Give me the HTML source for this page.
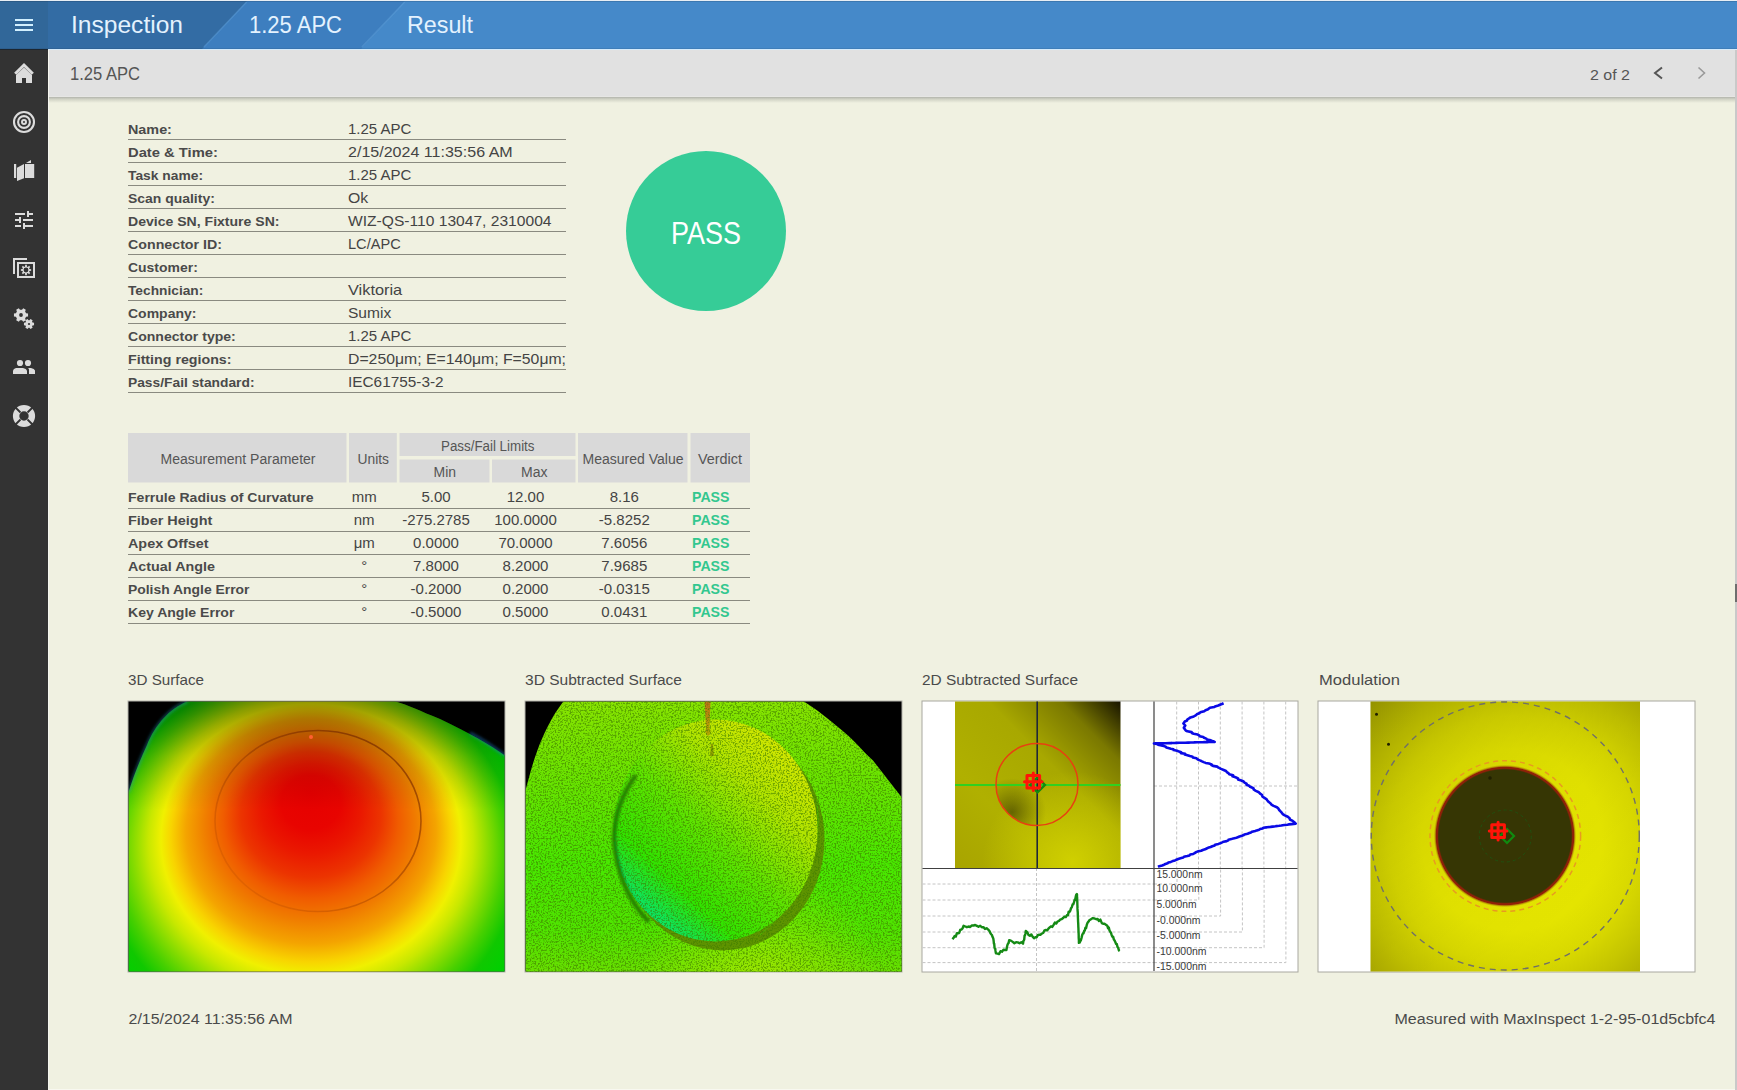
<!DOCTYPE html>
<html><head><meta charset="utf-8"><title>Inspection Result</title>
<style>html,body{margin:0;padding:0;width:1737px;height:1090px;overflow:hidden;background:#f0f1e1}
svg{display:block;font-family:"Liberation Sans", sans-serif}</style></head>
<body><svg width="1737" height="1090" viewBox="0 0 1737 1090">
<rect x="0" y="0" width="1737" height="1090" fill="#f0f1e1" />
<rect x="0" y="0" width="1737" height="1" fill="#e8eef4" />
<defs><linearGradient id="hdr" x1="0" x2="1" y1="0" y2="0"><stop offset="0" stop-color="#4388c8"/><stop offset="1" stop-color="#4589ca"/></linearGradient><linearGradient id="shadow" x1="0" x2="0" y1="0" y2="1"><stop offset="0" stop-color="#b2b4ac"/><stop offset="0.35" stop-color="#d0d2c4"/><stop offset="1" stop-color="#f0f1e1"/></linearGradient></defs>
<rect x="0" y="1" width="1737" height="48" fill="#4589c9" />
<polygon points="0,1 405,1 361,49 0,49" fill="#3d7ebf"/>
<polygon points="0,1 247,1 202,49 0,49" fill="#336ca4"/>
<rect x="0" y="1" width="48" height="48" fill="#316799" />
<rect x="48" y="49" width="1689" height="1" fill="#d4eafa" />
<rect x="0" y="1" width="1737" height="1" fill="#000000" opacity="0.12"/>
<rect x="0" y="48" width="1737" height="1" fill="#000000" opacity="0.08"/>
<path d="M246.6,2 L203.9,47 M404.6,2 L361.9,47" stroke="#6aa8e0" stroke-opacity="0.35" stroke-width="1.6"/>
<rect x="0" y="49" width="48" height="1041" fill="#333333" />
<rect x="0" y="49" width="48" height="1" fill="#1c2630" />
<rect x="48" y="50" width="1687" height="47" fill="#e1e1e1" />
<rect x="48" y="97" width="1687" height="6" fill="url(#shadow)" />
<rect x="48" y="96" width="1687" height="1" fill="#e6e6e4" />
<rect x="48" y="50" width="1" height="1040" fill="#f6f6f0" />
<rect x="1735" y="50" width="2" height="1040" fill="#c9c9c9" />
<rect x="1735" y="584" width="2" height="18" fill="#6e6e6e" />
<rect x="48" y="1089" width="1687" height="1" fill="#f8f8f0" />
<text x="71" y="33" font-size="23.5" fill="#e4f2fe" textLength="112" lengthAdjust="spacingAndGlyphs" >Inspection</text>
<text x="249" y="33" font-size="23.5" fill="#e4f2fe" textLength="93" lengthAdjust="spacingAndGlyphs" >1.25 APC</text>
<text x="407" y="33" font-size="23.5" fill="#e4f2fe" textLength="66" lengthAdjust="spacingAndGlyphs" >Result</text>
<rect x="15" y="19" width="18" height="2" fill="#d2f0ff" />
<rect x="15" y="24" width="18" height="2" fill="#d2f0ff" />
<rect x="15" y="29" width="18" height="2" fill="#d2f0ff" />
<text x="70" y="80" font-size="17.5" fill="#555555" textLength="70" lengthAdjust="spacingAndGlyphs" >1.25 APC</text>
<text x="1590" y="80" font-size="15" fill="#555555" textLength="40" lengthAdjust="spacingAndGlyphs" >2 of 2</text>
<polyline points="1662,67.5 1655,73 1662,78.5" fill="none" stroke="#555" stroke-width="2"/>
<polyline points="1698.5,67.5 1704.5,73 1698.5,78.5" fill="none" stroke="#999" stroke-width="1.6"/>
<text x="128" y="134" font-size="13.5" fill="#4a4a4a" font-weight="bold" textLength="43.9" lengthAdjust="spacingAndGlyphs" >Name:</text>
<text x="348" y="134" font-size="14.5" fill="#444444" textLength="63.4" lengthAdjust="spacingAndGlyphs" >1.25 APC</text>
<rect x="128" y="139" width="438" height="1" fill="#8a8a80" />
<text x="128" y="157" font-size="13.5" fill="#4a4a4a" font-weight="bold" textLength="89.9" lengthAdjust="spacingAndGlyphs" >Date &amp; Time:</text>
<text x="348" y="157" font-size="14.5" fill="#444444" textLength="164.7" lengthAdjust="spacingAndGlyphs" >2/15/2024 11:35:56 AM</text>
<rect x="128" y="162" width="438" height="1" fill="#8a8a80" />
<text x="128" y="180" font-size="13.5" fill="#4a4a4a" font-weight="bold" textLength="75.0" lengthAdjust="spacingAndGlyphs" >Task name:</text>
<text x="348" y="180" font-size="14.5" fill="#444444" textLength="63.4" lengthAdjust="spacingAndGlyphs" >1.25 APC</text>
<rect x="128" y="185" width="438" height="1" fill="#8a8a80" />
<text x="128" y="203" font-size="13.5" fill="#4a4a4a" font-weight="bold" textLength="86.8" lengthAdjust="spacingAndGlyphs" >Scan quality:</text>
<text x="348" y="203" font-size="14.5" fill="#444444" textLength="20.2" lengthAdjust="spacingAndGlyphs" >Ok</text>
<rect x="128" y="208" width="438" height="1" fill="#8a8a80" />
<text x="128" y="226" font-size="13.5" fill="#4a4a4a" font-weight="bold" textLength="151.5" lengthAdjust="spacingAndGlyphs" >Device SN, Fixture SN:</text>
<text x="348" y="226" font-size="14.5" fill="#444444" textLength="203.5" lengthAdjust="spacingAndGlyphs" >WIZ-QS-110 13047, 2310004</text>
<rect x="128" y="231" width="438" height="1" fill="#8a8a80" />
<text x="128" y="249" font-size="13.5" fill="#4a4a4a" font-weight="bold" textLength="94.0" lengthAdjust="spacingAndGlyphs" >Connector ID:</text>
<text x="348" y="249" font-size="14.5" fill="#444444" textLength="52.7" lengthAdjust="spacingAndGlyphs" >LC/APC</text>
<rect x="128" y="254" width="438" height="1" fill="#8a8a80" />
<text x="128" y="272" font-size="13.5" fill="#4a4a4a" font-weight="bold" textLength="69.8" lengthAdjust="spacingAndGlyphs" >Customer:</text>
<rect x="128" y="277" width="438" height="1" fill="#8a8a80" />
<text x="128" y="295" font-size="13.5" fill="#4a4a4a" font-weight="bold" textLength="75.3" lengthAdjust="spacingAndGlyphs" >Technician:</text>
<text x="348" y="295" font-size="14.5" fill="#444444" textLength="54.2" lengthAdjust="spacingAndGlyphs" >Viktoria</text>
<rect x="128" y="300" width="438" height="1" fill="#8a8a80" />
<text x="128" y="318" font-size="13.5" fill="#4a4a4a" font-weight="bold" textLength="68.4" lengthAdjust="spacingAndGlyphs" >Company:</text>
<text x="348" y="318" font-size="14.5" fill="#444444" textLength="43.2" lengthAdjust="spacingAndGlyphs" >Sumix</text>
<rect x="128" y="323" width="438" height="1" fill="#8a8a80" />
<text x="128" y="341" font-size="13.5" fill="#4a4a4a" font-weight="bold" textLength="107.8" lengthAdjust="spacingAndGlyphs" >Connector type:</text>
<text x="348" y="341" font-size="14.5" fill="#444444" textLength="63.4" lengthAdjust="spacingAndGlyphs" >1.25 APC</text>
<rect x="128" y="346" width="438" height="1" fill="#8a8a80" />
<text x="128" y="364" font-size="13.5" fill="#4a4a4a" font-weight="bold" textLength="103.5" lengthAdjust="spacingAndGlyphs" >Fitting regions:</text>
<text x="348" y="364" font-size="14.5" fill="#444444" textLength="218.0" lengthAdjust="spacingAndGlyphs" >D=250μm; E=140μm; F=50μm;</text>
<rect x="128" y="369" width="438" height="1" fill="#8a8a80" />
<text x="128" y="387" font-size="13.5" fill="#4a4a4a" font-weight="bold" textLength="126.5" lengthAdjust="spacingAndGlyphs" >Pass/Fail standard:</text>
<text x="348" y="387" font-size="14.5" fill="#444444" textLength="95.6" lengthAdjust="spacingAndGlyphs" >IEC61755-3-2</text>
<rect x="128" y="392" width="438" height="1" fill="#8a8a80" />
<circle cx="706" cy="231" r="80" fill="#36cc97"/>
<text x="706" y="244" font-size="31" fill="#ffffff" text-anchor="middle" textLength="70" lengthAdjust="spacingAndGlyphs" >PASS</text>
<rect x="128" y="433" width="218.5" height="49.5" fill="#d9d9d9" />
<rect x="349" y="433" width="47.8" height="49.5" fill="#d9d9d9" />
<rect x="399.5" y="433" width="176" height="23" fill="#d9d9d9" />
<rect x="399.5" y="459.5" width="90" height="23" fill="#d9d9d9" />
<rect x="492" y="459.5" width="83.5" height="23" fill="#d9d9d9" />
<rect x="578" y="433" width="109.5" height="49.5" fill="#d9d9d9" />
<rect x="690.5" y="433" width="59.5" height="49.5" fill="#d9d9d9" />
<text x="160.5" y="464" font-size="14" fill="#555555" textLength="155" lengthAdjust="spacingAndGlyphs" >Measurement Parameter</text>
<text x="357.5" y="464" font-size="14" fill="#555555" textLength="31.5" lengthAdjust="spacingAndGlyphs" >Units</text>
<text x="441" y="451" font-size="14" fill="#555555" textLength="93.5" lengthAdjust="spacingAndGlyphs" >Pass/Fail Limits</text>
<text x="433.5" y="477" font-size="14" fill="#555555" textLength="22.5" lengthAdjust="spacingAndGlyphs" >Min</text>
<text x="521" y="477" font-size="14" fill="#555555" textLength="26.5" lengthAdjust="spacingAndGlyphs" >Max</text>
<text x="582.5" y="464" font-size="14" fill="#555555" textLength="101" lengthAdjust="spacingAndGlyphs" >Measured Value</text>
<text x="698" y="464" font-size="14" fill="#555555" textLength="44" lengthAdjust="spacingAndGlyphs" >Verdict</text>
<text x="128" y="501.5" font-size="13.5" fill="#4a4a4a" font-weight="bold" textLength="185.6" lengthAdjust="spacingAndGlyphs" >Ferrule Radius of Curvature</text>
<text x="364.2" y="501.5" font-size="15" fill="#444" text-anchor="middle" >mm</text>
<text x="436" y="501.5" font-size="15" fill="#444" text-anchor="middle" >5.00</text>
<text x="525.5" y="501.5" font-size="15" fill="#444" text-anchor="middle" >12.00</text>
<text x="624.3" y="501.5" font-size="15" fill="#444" text-anchor="middle" >8.16</text>
<text x="692" y="501.5" font-size="14" fill="#33c78f" font-weight="bold" textLength="37.5" lengthAdjust="spacingAndGlyphs" >PASS</text>
<rect x="128" y="508" width="622" height="1" fill="#8a8a80" />
<text x="128" y="524.5" font-size="13.5" fill="#4a4a4a" font-weight="bold" textLength="84.3" lengthAdjust="spacingAndGlyphs" >Fiber Height</text>
<text x="364.2" y="524.5" font-size="15" fill="#444" text-anchor="middle" >nm</text>
<text x="436" y="524.5" font-size="15" fill="#444" text-anchor="middle" >-275.2785</text>
<text x="525.5" y="524.5" font-size="15" fill="#444" text-anchor="middle" >100.0000</text>
<text x="624.3" y="524.5" font-size="15" fill="#444" text-anchor="middle" >-5.8252</text>
<text x="692" y="524.5" font-size="14" fill="#33c78f" font-weight="bold" textLength="37.5" lengthAdjust="spacingAndGlyphs" >PASS</text>
<rect x="128" y="531" width="622" height="1" fill="#8a8a80" />
<text x="128" y="547.5" font-size="13.5" fill="#4a4a4a" font-weight="bold" textLength="80.6" lengthAdjust="spacingAndGlyphs" >Apex Offset</text>
<text x="364.2" y="547.5" font-size="15" fill="#444" text-anchor="middle" >μm</text>
<text x="436" y="547.5" font-size="15" fill="#444" text-anchor="middle" >0.0000</text>
<text x="525.5" y="547.5" font-size="15" fill="#444" text-anchor="middle" >70.0000</text>
<text x="624.3" y="547.5" font-size="15" fill="#444" text-anchor="middle" >7.6056</text>
<text x="692" y="547.5" font-size="14" fill="#33c78f" font-weight="bold" textLength="37.5" lengthAdjust="spacingAndGlyphs" >PASS</text>
<rect x="128" y="554" width="622" height="1" fill="#8a8a80" />
<text x="128" y="570.5" font-size="13.5" fill="#4a4a4a" font-weight="bold" textLength="86.9" lengthAdjust="spacingAndGlyphs" >Actual Angle</text>
<text x="364.2" y="570.5" font-size="15" fill="#444" text-anchor="middle" >°</text>
<text x="436" y="570.5" font-size="15" fill="#444" text-anchor="middle" >7.8000</text>
<text x="525.5" y="570.5" font-size="15" fill="#444" text-anchor="middle" >8.2000</text>
<text x="624.3" y="570.5" font-size="15" fill="#444" text-anchor="middle" >7.9685</text>
<text x="692" y="570.5" font-size="14" fill="#33c78f" font-weight="bold" textLength="37.5" lengthAdjust="spacingAndGlyphs" >PASS</text>
<rect x="128" y="577" width="622" height="1" fill="#8a8a80" />
<text x="128" y="593.5" font-size="13.5" fill="#4a4a4a" font-weight="bold" textLength="121.5" lengthAdjust="spacingAndGlyphs" >Polish Angle Error</text>
<text x="364.2" y="593.5" font-size="15" fill="#444" text-anchor="middle" >°</text>
<text x="436" y="593.5" font-size="15" fill="#444" text-anchor="middle" >-0.2000</text>
<text x="525.5" y="593.5" font-size="15" fill="#444" text-anchor="middle" >0.2000</text>
<text x="624.3" y="593.5" font-size="15" fill="#444" text-anchor="middle" >-0.0315</text>
<text x="692" y="593.5" font-size="14" fill="#33c78f" font-weight="bold" textLength="37.5" lengthAdjust="spacingAndGlyphs" >PASS</text>
<rect x="128" y="600" width="622" height="1" fill="#8a8a80" />
<text x="128" y="616.5" font-size="13.5" fill="#4a4a4a" font-weight="bold" textLength="106.4" lengthAdjust="spacingAndGlyphs" >Key Angle Error</text>
<text x="364.2" y="616.5" font-size="15" fill="#444" text-anchor="middle" >°</text>
<text x="436" y="616.5" font-size="15" fill="#444" text-anchor="middle" >-0.5000</text>
<text x="525.5" y="616.5" font-size="15" fill="#444" text-anchor="middle" >0.5000</text>
<text x="624.3" y="616.5" font-size="15" fill="#444" text-anchor="middle" >0.0431</text>
<text x="692" y="616.5" font-size="14" fill="#33c78f" font-weight="bold" textLength="37.5" lengthAdjust="spacingAndGlyphs" >PASS</text>
<rect x="128" y="623" width="622" height="1" fill="#8a8a80" />
<text x="128" y="685" font-size="15" fill="#4a4a4a" textLength="76" lengthAdjust="spacingAndGlyphs" >3D Surface</text>
<text x="525" y="685" font-size="15" fill="#4a4a4a" textLength="157" lengthAdjust="spacingAndGlyphs" >3D Subtracted Surface</text>
<text x="922" y="685" font-size="15" fill="#4a4a4a" textLength="156" lengthAdjust="spacingAndGlyphs" >2D Subtracted Surface</text>
<text x="1319" y="685" font-size="15" fill="#4a4a4a" textLength="81" lengthAdjust="spacingAndGlyphs" >Modulation</text>
<text x="128.5" y="1024" font-size="15.5" fill="#4a4a4a" textLength="164" lengthAdjust="spacingAndGlyphs" >2/15/2024 11:35:56 AM</text>
<text x="1394.5" y="1024" font-size="15.5" fill="#4a4a4a" textLength="321" lengthAdjust="spacingAndGlyphs" >Measured with MaxInspect 1-2-95-01d5cbfc4</text>
<polyline points="15.2,73.8 24,65 32.8,73.8" fill="none" stroke="#dcdcdc" stroke-width="3"/>
<polygon points="16,75 24,67.5 32,75 32,83 26,83 26,78 22,78 22,83 16,83" fill="#dcdcdc"/>
<circle cx="24" cy="122" r="10" fill="none" stroke="#dcdcdc" stroke-width="2.1"/>
<circle cx="24" cy="122" r="5.9" fill="none" stroke="#dcdcdc" stroke-width="2.1"/>
<circle cx="24" cy="122" r="2" fill="none" stroke="#dcdcdc" stroke-width="2"/>
<rect x="14" y="164" width="2.2" height="14" fill="#dcdcdc"/>
<polygon points="17,167.8 24,164 24,178.2 17,181" fill="#dcdcdc"/>
<rect x="25" y="164" width="9.2" height="14" fill="#dcdcdc"/>
<polygon points="26,163 31,160 31,163" fill="#dcdcdc"/>
<rect x="15" y="213" width="10" height="2" fill="#dcdcdc"/>
<rect x="27" y="213" width="6" height="2" fill="#dcdcdc"/>
<rect x="27" y="211" width="2" height="6" fill="#dcdcdc"/>
<rect x="15" y="219" width="5" height="2" fill="#dcdcdc"/>
<rect x="19" y="217" width="2" height="6" fill="#dcdcdc"/>
<rect x="23" y="219" width="10" height="2" fill="#dcdcdc"/>
<rect x="15" y="225" width="6" height="2" fill="#dcdcdc"/>
<rect x="23" y="223" width="2" height="6" fill="#dcdcdc"/>
<rect x="25" y="225" width="8" height="2" fill="#dcdcdc"/>
<path d="M14,274 V259 H27" fill="none" stroke="#dcdcdc" stroke-width="2"/>
<rect x="18" y="263" width="16" height="14" fill="none" stroke="#dcdcdc" stroke-width="2"/>
<polygon points="29.48,269.09 31.13,269.17 31.13,270.83 29.48,270.91 29.11,271.82 30.22,273.04 29.04,274.22 27.82,273.11 26.91,273.48 26.83,275.13 25.17,275.13 25.09,273.48 24.18,273.11 22.96,274.22 21.78,273.04 22.89,271.82 22.52,270.91 20.87,270.83 20.87,269.17 22.52,269.09 22.89,268.18 21.78,266.96 22.96,265.78 24.18,266.89 25.09,266.52 25.17,264.87 26.83,264.87 26.91,266.52 27.82,266.89 29.04,265.78 30.22,266.96 29.11,268.18" fill="#dcdcdc"/><circle cx="26" cy="270" r="2.4" fill="#333"/>
<rect x="24.6" y="268.6" width="2.8" height="2.8" fill="#333"/>
<polygon points="26.10,313.22 28.04,313.50 28.04,316.50 26.10,316.78 25.09,318.52 25.82,320.35 23.22,321.85 22.01,320.31 19.99,320.31 18.78,321.85 16.18,320.35 16.91,318.52 15.90,316.78 13.96,316.50 13.96,313.50 15.90,313.22 16.91,311.48 16.18,309.65 18.78,308.15 19.99,309.69 22.01,309.69 23.22,308.15 25.82,309.65 25.09,311.48" fill="#dcdcdc"/><circle cx="21" cy="315" r="1.9" fill="#333"/>
<polygon points="32.50,322.52 34.04,322.71 34.04,325.29 32.50,325.48 32.03,326.29 32.63,327.72 30.41,329.01 29.47,327.77 28.53,327.77 27.59,329.01 25.37,327.72 25.97,326.29 25.50,325.48 23.96,325.29 23.96,322.71 25.50,322.52 25.97,321.71 25.37,320.28 27.59,318.99 28.53,320.23 29.47,320.23 30.41,318.99 32.63,320.28 32.03,321.71" fill="#dcdcdc"/><circle cx="29" cy="324" r="1.1" fill="#333"/>
<circle cx="20" cy="363" r="3.1" fill="#dcdcdc"/><circle cx="28" cy="363" r="3.1" fill="#dcdcdc"/>
<path d="M13,374 V370.5 Q13.5,368.6 16,368 H23 Q26.5,368.6 27,370.5 V374 Z" fill="#dcdcdc"/>
<path d="M28.2,368 H31 Q34.5,368.8 35,370.5 V374 H29 V369.5 Z" fill="#dcdcdc"/>
<circle cx="24" cy="416" r="7.9" fill="none" stroke="#dcdcdc" stroke-width="6.4"/>
<path d="M15.5,407.5 L20.5,412.5 M32.5,407.5 L27.5,412.5 M15.5,424.5 L20.5,419.5 M32.5,424.5 L27.5,419.5" stroke="#333" stroke-width="1.8"/>
<defs><clipPath id="c1"><path d="M187.5,701.5 C170,708 155,725 147,745 C140,760 134,775 128.5,792 L128.5,972 L505,972 L505,755.5 C490,745 470,733 440,719 C420,711 408,705 395.5,701.5 Z"/></clipPath>
<radialGradient id="g1" gradientUnits="userSpaceOnUse" cx="311" cy="869.4" r="250" fx="311" fy="785" gradientTransform="translate(311,869.4) scale(1,0.9) translate(-311,-869.4)">
<stop offset="0" stop-color="#e60000"/><stop offset="0.12" stop-color="#e80400"/><stop offset="0.2" stop-color="#ea1800"/>
<stop offset="0.28" stop-color="#ec3400"/><stop offset="0.35" stop-color="#f05c00"/><stop offset="0.42" stop-color="#f07c00"/>
<stop offset="0.5" stop-color="#f4a400"/><stop offset="0.56" stop-color="#f8d400"/><stop offset="0.6" stop-color="#f0f000"/>
<stop offset="0.65" stop-color="#c8e800"/><stop offset="0.71" stop-color="#88dc00"/><stop offset="0.77" stop-color="#48d000"/><stop offset="0.83" stop-color="#10c800"/><stop offset="0.9" stop-color="#00d000"/><stop offset="1" stop-color="#00c860"/></radialGradient>
<clipPath id="c1r"><rect x="128.5" y="701.5" width="376" height="270"/></clipPath>
<linearGradient id="g1r" gradientUnits="userSpaceOnUse" x1="400" y1="740" x2="240" y2="900"><stop offset="0" stop-color="#5a1000" stop-opacity="0.55"/><stop offset="0.6" stop-color="#5a1000" stop-opacity="0.25"/><stop offset="1" stop-color="#5a1000" stop-opacity="0.08"/></linearGradient>
<filter id="b2" x="-0.2" y="-0.2" width="1.4" height="1.4"><feGaussianBlur stdDeviation="1.6"/></filter>
<linearGradient id="g2s" x1="0" x2="0" y1="0" y2="1"><stop offset="0" stop-color="#c07018"/><stop offset="1" stop-color="#b0a800"/></linearGradient>
<linearGradient id="g1t" gradientUnits="userSpaceOnUse" x1="0" x2="0" y1="701.5" y2="810"><stop offset="0" stop-color="#000" stop-opacity="0.36"/><stop offset="0.5" stop-color="#000" stop-opacity="0.14"/><stop offset="1" stop-color="#000" stop-opacity="0"/></linearGradient>
<clipPath id="c2"><path d="M563.4,701.5 C552,716 543,735 537.4,750.6 C532,765 529,778 525.5,790.2 L525.5,972 L902,972 L902,797.7 C892,785 882,772 873,760.5 C862,750 855,742 848.3,735.7 C830,720 815,708 803.7,701.5 Z"/></clipPath>
<linearGradient id="g2" gradientUnits="userSpaceOnUse" x1="0" y1="701.5" x2="0" y2="972">
<stop offset="0" stop-color="#88e400"/><stop offset="0.3" stop-color="#68e400"/><stop offset="0.6" stop-color="#48e800"/><stop offset="0.85" stop-color="#50e400"/><stop offset="1" stop-color="#68e000"/></linearGradient>
<linearGradient id="g2c" gradientUnits="userSpaceOnUse" x1="790" y1="725" x2="625" y2="905">
<stop offset="0" stop-color="#e0e800"/><stop offset="0.3" stop-color="#b0e400"/><stop offset="0.55" stop-color="#60e400"/><stop offset="0.8" stop-color="#30e400"/><stop offset="1" stop-color="#00e480"/></linearGradient>
<radialGradient id="g2l" gradientUnits="userSpaceOnUse" cx="760" cy="990" r="120"><stop offset="0" stop-color="#a8e800" stop-opacity="0.9"/><stop offset="1" stop-color="#a8e800" stop-opacity="0"/></radialGradient>
<filter id="n2" x="0" y="0" width="1" height="1"><feTurbulence type="fractalNoise" baseFrequency="0.6" numOctaves="2" seed="7"/>
<feColorMatrix values="0 0 0 0 0.05  0 0 0 0 0.2  0 0 0 0 0  0 0 0 -5 2.65"/></filter>
<linearGradient id="g3" gradientUnits="userSpaceOnUse" x1="1120.5" y1="701.5" x2="954.5" y2="867.5">
<stop offset="0" stop-color="#181400"/><stop offset="0.18" stop-color="#7a7800"/><stop offset="0.4" stop-color="#a8a800"/><stop offset="0.7" stop-color="#b0b000"/><stop offset="1" stop-color="#a8a400"/></linearGradient>
<radialGradient id="g3b" gradientUnits="userSpaceOnUse" cx="1072.5" cy="861.5" r="90"><stop offset="0" stop-color="#d8d800" stop-opacity="0.8"/><stop offset="1" stop-color="#d8d800" stop-opacity="0"/></radialGradient>
<clipPath id="c3c"><circle cx="1037" cy="784.5" r="41"/></clipPath><radialGradient id="g3c" gradientUnits="userSpaceOnUse" cx="1012" cy="812" r="34"><stop offset="0" stop-color="#303000" stop-opacity="0.6"/><stop offset="1" stop-color="#404000" stop-opacity="0"/></radialGradient>
<radialGradient id="g4" gradientUnits="userSpaceOnUse" cx="1512" cy="840" r="200">
<stop offset="0" stop-color="#e8e800"/><stop offset="0.45" stop-color="#e6e600"/><stop offset="0.62" stop-color="#dada00"/><stop offset="0.8" stop-color="#c4c400"/><stop offset="1" stop-color="#a8a600"/></radialGradient>
<linearGradient id="g4s" gradientUnits="userSpaceOnUse" x1="1370" y1="701" x2="1600" y2="940"><stop offset="0" stop-color="#000" stop-opacity="0.13"/><stop offset="0.6" stop-color="#000" stop-opacity="0.03"/><stop offset="1" stop-color="#000" stop-opacity="0"/></linearGradient>
<radialGradient id="g4d" gradientUnits="userSpaceOnUse" cx="1505" cy="836" r="72"><stop offset="0.92" stop-color="#363604"/><stop offset="0.94" stop-color="#902008"/><stop offset="0.955" stop-color="#902008"/><stop offset="0.99" stop-color="#b0a800" stop-opacity="0"/></radialGradient></defs>
<rect x="128.0" y="701.0" width="377" height="271" fill="#000" stroke="#b4b4ac" stroke-width="1"/>
<g clip-path="url(#c1)"><rect x="128.5" y="701.5" width="376" height="270" fill="url(#g1)"/><rect x="128.5" y="701.5" width="376" height="270" fill="url(#g1t)"/><ellipse cx="318" cy="821" rx="103" ry="90.5" fill="none" stroke="url(#g1r)" stroke-width="1.6"/><circle cx="311" cy="737" r="2" fill="#ff6030"/></g>
<path d="M187.5,701.5 C170,708 155,725 147,745 C140,760 134,775 128.5,792" fill="none" stroke="#2090b0" stroke-opacity="0.45" stroke-width="3" filter="url(#b2)" clip-path="url(#c1r)"/>
<path d="M470,733 C485,741 495,748 505,755.5" fill="none" stroke="#2080d0" stroke-opacity="0.5" stroke-width="3" filter="url(#b2)" clip-path="url(#c1r)"/>
<rect x="525.0" y="701.0" width="377" height="271" fill="#000" stroke="#b4b4ac" stroke-width="1"/>
<g clip-path="url(#c2)"><rect x="525.5" y="701.5" width="376" height="270" fill="url(#g2)"/><rect x="525.5" y="701.5" width="376" height="270" fill="url(#g2l)"/><ellipse cx="722.5" cy="839.5" rx="102" ry="111" fill="#5e9400"/><path d="M817,800 Q826,880 760,935" fill="none" stroke="#40d000" stroke-width="1" stroke-opacity="0.6"/><ellipse cx="715.5" cy="830.5" rx="102" ry="111" fill="url(#g2c)"/><path d="M636,775 Q614,805 614,840 Q618,890 649,922" fill="none" stroke="#0a3000" stroke-opacity="0.6" stroke-width="4" filter="url(#b2)"/><path d="M704.5,701.5 H710.5 L709.5,728 Q712,734 708,736 Q704,734 706,728 Z" fill="url(#g2s)"/><path d="M711,744 L713,744 L714,756 L710,756 Z" fill="#808000" opacity="0.7"/><rect x="525.5" y="701.5" width="376" height="270" filter="url(#n2)" opacity="0.6"/></g>
<rect x="922.0" y="701.0" width="376" height="271" fill="#fff" stroke="#a8a8a0" stroke-width="1"/>
<rect x="955.0" y="701.5" width="165.5" height="166.5" fill="url(#g3)"/>
<rect x="955.0" y="701.5" width="165.5" height="166.5" fill="url(#g3b)"/>
<g clip-path="url(#c3c)"><rect x="990" y="740" width="95" height="90" fill="url(#g3c)"/></g>
<path d="M1176.7,701.5 V868 M1198.5,701.5 V868 M1220.3,701.5 V868 M1242.1,701.5 V868 M1263.9,701.5 V868 M1285.7,701.5 V868 M1154,786 H1297 M922.5,884 H1154 M922.5,900 H1154 M922.5,916 H1154 M922.5,932 H1154 M922.5,947.7 H1154 M922.5,962.6 H1154 M1036.5,868 V971 M1154,884 H1177 V868 M1154,900 H1198.8 V868 M1154,916 H1220.6 V868 M1154,932 H1242.4 V868 M1154,947.7 H1264.1 V868 M1154,962.6 H1285.9 V868" fill="none" stroke="#c4c4c4" stroke-width="1" stroke-dasharray="3,2"/>
<path d="M1154,701.5 V971 M922.5,868.5 H1297.5" stroke="#404040" stroke-width="1.2" fill="none"/>
<line x1="955" y1="785" x2="1120.5" y2="785" stroke="#30d020" stroke-width="1.8"/>
<line x1="1037.2" y1="701.5" x2="1037.2" y2="868" stroke="#202838" stroke-width="1.6"/>
<circle cx="1037" cy="784.5" r="41" fill="none" stroke="#e84010" stroke-width="1.5"/>
<path d="M1037.5,777.4 L1045.0,784.9 L1037.5,792.4 L1030.0,784.9 Z" fill="none" stroke="#108a10" stroke-width="2.2"/>
<path d="M1027.00,775.40 H1039.60 M1027.00,775.40 V788.00 M1024.48,781.70 H1042.12 M1033.30,772.88 V790.52 M1027.00,788.00 H1039.60 M1039.60,775.40 V788.00" stroke="#ff1408" stroke-width="3" stroke-linecap="round" fill="none"/>
<polyline points="1223.6,703.2 1221.9,704.0 1220.0,704.7 1218.3,705.5 1215.8,706.2 1214.2,707.0 1209.9,707.7 1208.9,708.5 1208.2,709.2 1205.5,710.2 1204.2,711.2 1200.3,712.3 1199.3,713.3 1196.8,714.3 1195.7,715.4 1193.8,716.4 1190.5,717.4 1189.1,718.4 1187.3,719.5 1187.1,720.5 1184.8,721.5 1183.4,723.5 1185.3,725.6 1183.8,727.7 1185.2,729.7 1185.8,730.5 1187.4,731.3 1191.6,732.1 1191.8,733.0 1193.7,733.8 1197.6,734.6 1199.2,735.4 1199.6,736.2 1203.3,737.0 1204.1,737.8 1206.3,738.6 1207.0,739.5 1210.8,740.3 1212.1,741.1 1214.7,741.9 1212.5,742.0 1208.9,742.0 1207.1,742.1 1204.5,742.1 1202.4,742.2 1200.2,742.2 1198.8,742.3 1197.5,742.3 1194.0,742.4 1193.7,742.5 1190.8,742.5 1188.7,742.6 1188.0,742.6 1185.1,742.7 1182.6,742.7 1181.0,742.8 1179.6,742.8 1175.9,742.9 1176.2,742.9 1171.7,743.0 1171.6,743.1 1169.8,743.1 1165.6,743.2 1165.6,743.2 1162.5,743.3 1161.0,743.3 1157.5,743.4 1155.5,743.4 1153.9,743.5 1157.9,744.1 1157.9,744.8 1161.4,745.4 1163.8,746.1 1165.8,746.7 1166.3,747.4 1168.3,748.0 1170.8,748.7 1173.4,749.3 1173.6,750.1 1177.1,750.8 1179.1,751.6 1181.2,752.3 1180.9,753.1 1185.2,753.8 1184.8,754.6 1187.4,755.3 1189.9,756.1 1192.6,756.8 1193.0,757.6 1196.4,758.3 1197.3,759.1 1198.6,759.9 1200.5,760.6 1202.0,761.4 1203.6,762.1 1205.7,762.9 1209.0,763.6 1211.7,764.4 1211.4,765.1 1213.0,765.9 1217.3,766.6 1218.0,767.4 1219.6,768.1 1221.0,768.9 1223.7,770.0 1226.0,771.0 1226.8,772.1 1228.4,773.1 1229.2,774.2 1233.1,775.2 1232.5,776.3 1235.5,777.3 1238.1,778.4 1238.0,779.4 1241.3,780.5 1243.6,781.5 1244.4,782.6 1246.6,783.6 1246.5,784.7 1249.1,785.7 1250.1,786.8 1253.5,788.2 1253.7,789.5 1255.8,790.9 1258.9,792.3 1260.1,793.6 1262.1,795.0 1262.4,796.4 1264.1,797.7 1266.4,799.1 1267.4,800.5 1268.5,801.8 1270.4,803.2 1271.4,804.6 1273.6,805.9 1276.9,807.3 1278.4,808.6 1279.2,810.0 1280.5,811.4 1281.7,812.7 1282.7,814.1 1284.8,815.4 1287.8,816.8 1289.6,818.2 1289.9,819.5 1292.7,820.9 1294.3,822.2 1295.7,823.6 1293.6,823.9 1291.7,824.1 1288.6,824.4 1287.4,824.7 1284.3,825.0 1282.7,825.2 1281.4,825.5 1279.1,825.8 1276.0,826.1 1275.6,826.3 1272.8,826.6 1270.5,826.9 1267.0,827.2 1266.3,827.4 1263.5,827.7 1262.6,828.4 1260.1,829.0 1259.1,829.7 1256.8,830.4 1255.2,831.0 1252.1,831.7 1251.0,832.4 1249.3,833.0 1247.6,833.7 1244.4,834.4 1243.8,835.0 1241.9,835.7 1239.5,836.4 1238.4,837.1 1236.4,837.7 1233.3,838.4 1231.4,839.1 1228.5,839.7 1228.4,840.4 1226.7,841.1 1223.6,841.7 1222.2,842.4 1220.3,843.2 1218.5,843.9 1215.1,844.7 1214.7,845.5 1212.3,846.2 1210.6,847.0 1208.0,847.8 1206.6,848.5 1205.1,849.3 1202.8,850.0 1201.1,850.8 1197.4,851.6 1195.8,852.3 1194.6,853.1 1193.2,853.9 1190.2,854.6 1189.5,855.4 1187.4,856.1 1183.9,856.8 1183.1,857.6 1180.5,858.3 1178.2,859.0 1176.4,859.7 1175.0,860.4 1172.7,861.1 1170.8,861.9 1168.4,862.6 1167.6,863.3 1165.4,864.0 1164.1,864.7 1162.1,865.5 1159.3,866.2 1158,866.9" fill="none" stroke="#0a0ae6" stroke-width="2.6" stroke-linejoin="round"/>
<polyline points="952.5,939.3 953.6,937.8 954.7,936.0 955.8,936.6 956.9,933.2 958.0,933.2 959.2,933.0 960.3,929.6 961.4,929.6 962.5,928.5 963.6,925.8 965.3,926.5 966.9,927.2 968.6,926.5 970.2,927.0 971.9,925.4 973.6,925.5 975.2,925.0 976.9,925.9 978.5,926.8 980.2,925.8 981.8,927.2 983.4,927.1 985.0,929.0 986.6,928.2 988.2,929.6 989.8,931.6 990.5,933.3 991.2,934.2 991.9,935.0 992.6,937.1 993.3,938.6 993.6,940.5 993.9,943.6 994.2,943.7 994.5,947.2 994.9,948.8 995.2,948.4 995.5,950.9 995.8,952.9 996.1,953.4 997.6,953.6 999.0,954.1 1000.5,951.2 1002.0,951.7 1003.5,949.6 1004.9,950.0 1006.4,950.0 1007.0,946.7 1007.5,944.7 1008.1,943.4 1008.6,943.0 1009.2,940.1 1010.9,940.6 1012.7,941.9 1014.4,943.3 1016.1,942.2 1017.8,942.4 1019.5,943.3 1021.3,942.2 1023.0,943.7 1023.4,941.0 1023.8,940.4 1024.2,939.7 1024.6,935.7 1025.0,935.3 1025.4,933.7 1025.8,930.9 1027.2,932.1 1028.5,934.9 1029.9,935.8 1031.3,934.4 1032.7,936.8 1034.0,938.3 1035.4,937.3 1036.7,937.3 1038.0,934.9 1039.3,934.8 1040.6,934.7 1041.9,933.5 1043.2,933.0 1044.5,930.3 1045.8,930.0 1047.1,930.4 1048.4,928.7 1049.7,927.4 1051.0,926.3 1052.3,926.9 1053.6,924.9 1054.9,922.5 1056.2,923.6 1057.6,921.5 1059.0,920.9 1060.3,919.5 1061.7,919.2 1063.1,918.0 1064.5,916.6 1065.8,917.1 1067.2,914.9 1068.0,915.1 1068.7,911.6 1069.5,912.0 1070.3,910.6 1071.0,908.2 1071.8,907.2 1072.6,904.5 1073.3,904.3 1074.1,901.9 1074.7,899.6 1075.2,899.7 1075.8,896.4 1076.3,894.6 1076.9,894.0 1077.0,894.4 1077.0,896.8 1077.1,897.1 1077.2,900.5 1077.2,900.6 1077.3,901.7 1077.4,905.7 1077.4,905.3 1077.5,908.9 1077.6,910.6 1077.6,911.3 1077.7,911.3 1077.8,913.1 1077.8,915.1 1077.9,917.2 1078.0,919.4 1078.1,922.0 1078.1,922.0 1078.2,923.1 1078.3,925.8 1078.3,926.3 1078.4,927.8 1078.5,930.6 1078.5,932.6 1078.6,932.6 1078.7,935.2 1078.7,937.5 1078.8,939.3 1078.9,939.9 1078.9,942.9 1079.0,942.6 1079.6,942.6 1080.3,941.3 1080.9,940.1 1081.6,937.6 1082.2,935.1 1082.9,933.5 1083.5,933.3 1084.2,930.9 1084.8,930.6 1085.4,927.7 1086.1,928.1 1086.7,925.2 1087.4,923.1 1088.0,922.1 1088.7,921.4 1089.3,920.2 1091.0,919.2 1092.8,918.1 1094.5,918.5 1096.2,919.2 1097.6,919.0 1099.0,921.0 1100.4,919.6 1101.8,923.1 1103.1,923.8 1104.5,923.8 1105.9,924.7 1107.3,925.7 1108.0,928.2 1108.8,927.5 1109.5,930.5 1110.2,931.7 1110.9,932.6 1111.7,935.2 1112.4,936.7 1113.1,936.6 1113.9,939.6 1114.6,940.5 1115.3,942.1 1116.1,944.0 1116.8,943.9 1117.5,946.9 1118.2,947.8 1119.0,950.6 1119.7,951.1" fill="none" stroke="#148a14" stroke-width="2.4" stroke-linejoin="round"/>
<text x="1156.5" y="877.6" font-size="11" fill="#383838" textLength="46" lengthAdjust="spacingAndGlyphs">15.000nm</text>
<text x="1156.5" y="892.1" font-size="11" fill="#383838" textLength="46" lengthAdjust="spacingAndGlyphs">10.000nm</text>
<text x="1156.5" y="907.6" font-size="11" fill="#383838" textLength="40" lengthAdjust="spacingAndGlyphs">5.000nm</text>
<text x="1156.5" y="923.7" font-size="11" fill="#383838" textLength="44" lengthAdjust="spacingAndGlyphs">-0.000nm</text>
<text x="1156.5" y="939.3" font-size="11" fill="#383838" textLength="44" lengthAdjust="spacingAndGlyphs">-5.000nm</text>
<text x="1156.5" y="955.3" font-size="11" fill="#383838" textLength="50" lengthAdjust="spacingAndGlyphs">-10.000nm</text>
<text x="1156.5" y="970.4" font-size="11" fill="#383838" textLength="50" lengthAdjust="spacingAndGlyphs">-15.000nm</text>
<rect x="1318.0" y="701.0" width="377" height="271" fill="#fff" stroke="#a8a8a0" stroke-width="1"/>
<rect x="1370.5" y="701.5" width="269.5" height="270" fill="url(#g4)"/>
<rect x="1370.5" y="701.5" width="269.5" height="270" fill="url(#g4s)"/>
<circle cx="1505.3" cy="836" r="72" fill="url(#g4d)"/>
<circle cx="1505.3" cy="836" r="134" fill="none" stroke="#707068" stroke-width="1.4" stroke-dasharray="6,5"/>
<circle cx="1505.3" cy="836" r="75.3" fill="none" stroke="#e89a20" stroke-width="1.5" stroke-dasharray="5,4"/>
<circle cx="1505.3" cy="836" r="26" fill="none" stroke="#205010" stroke-width="1" stroke-dasharray="3,3"/>
<path d="M1507,829 L1514,836 L1507,843 L1500,836 Z" fill="none" stroke="#108a10" stroke-width="2.2"/>
<path d="M1491.80,824.80 H1504.40 M1491.80,824.80 V837.40 M1489.28,831.10 H1506.92 M1498.10,822.28 V839.92 M1491.80,837.40 H1504.40 M1504.40,824.80 V837.40" stroke="#ff1408" stroke-width="3" stroke-linecap="round" fill="none"/>
<circle cx="1376.5" cy="714.3" r="1.5" fill="#202000"/>
<circle cx="1388.5" cy="744.2" r="1.5" fill="#202000"/>
<circle cx="1490" cy="778" r="1.8" fill="#202000"/>
</svg></body></html>
